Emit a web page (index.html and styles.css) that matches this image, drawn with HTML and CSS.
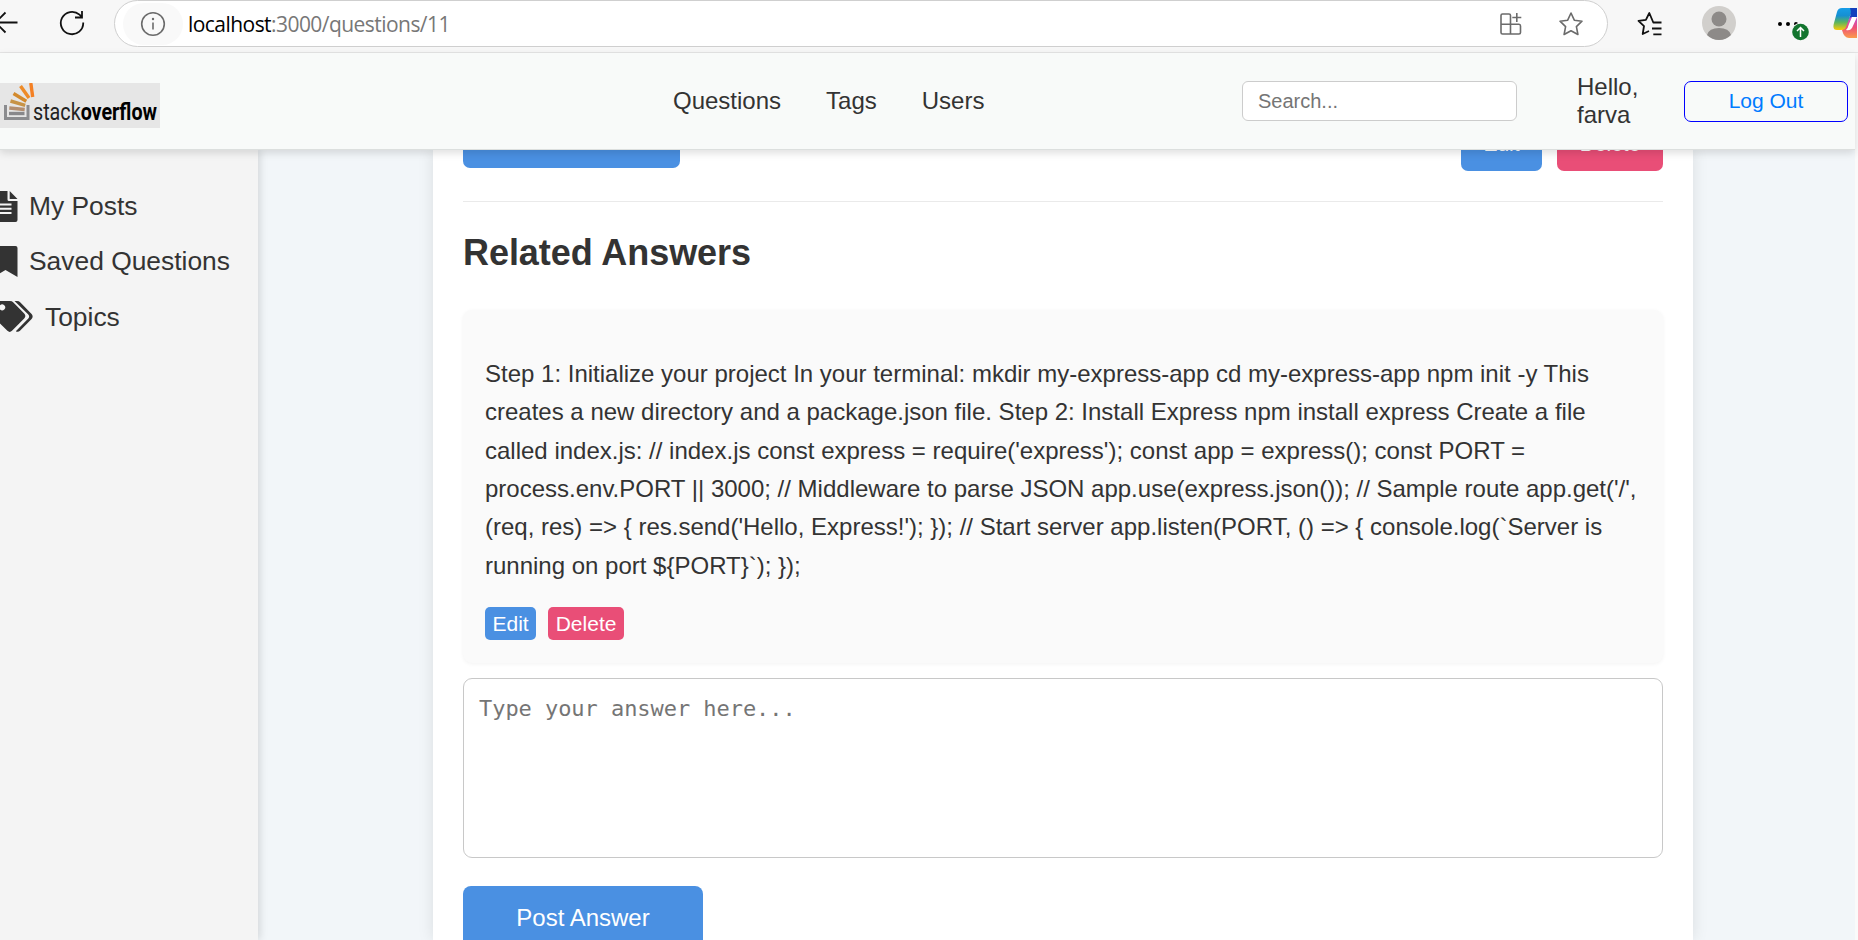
FILE: index.html
```html
<!DOCTYPE html>
<html lang="en">
<head>
<meta charset="utf-8">
<title>Question 11</title>
<link rel="stylesheet" href="styles.css">
</head>
<body>
<div class="browser">
  <svg class="ic back" width="18" height="26" viewBox="0 0 18 26"><path d="M17.5 12.5H-3M5.500 2.500L-4.500 12.500L5.500 22.500"/></svg>
  <svg class="ic reload" width="26" height="26" viewBox="0 0 26 26"><path d="M24.200 12.500A11.200 11.200 0 1 1 20.500 4.700L23 7.200M23 1V7.500H16"/></svg>
  <div class="address">
    <span class="info"><svg width="26" height="26" viewBox="0 0 26 26"><circle cx="13" cy="13" r="11.300"/><path d="M13 11.500V18.500"/><circle class="dot" cx="13" cy="8" r="1.200"/></svg></span>
    <span class="url"><b>localhost</b>:3000/questions/11</span>
    <svg class="addic" width="24" height="24" viewBox="0 0 24 24"><path d="M11.500 22V3.500Q11.500 2 10 2H3.500Q2 2 2 3.500V20.500Q2 22 3.500 22H20Q21.500 22 21.500 20.500V14Q21.500 12.300 20 12.300H2M17.800 1V10M13.300 5.500H22.300"/></svg>
    <svg class="star" width="26" height="26" viewBox="0 0 26 26"><path stroke-linejoin="round" d="M13 2L16.300 9.200L24 10.200L18.400 15.600L19.900 23.500L13 19.700L6.100 23.500L7.600 15.600L2 10.200L9.700 9.200Z"/></svg>
  </div>
  <svg class="ic fav" width="28" height="28" viewBox="0 0 28 28"><path stroke-linejoin="round" d="M25.500 12.500H17.300L13.300 3L9.900 9.800L2.500 10.800L8 16.100L6.700 24L13 21M16 18.500H25.500M17.300 24.400H25.500"/></svg>
  <svg class="avatar" width="34" height="34" viewBox="0 0 34 34"><circle cx="17" cy="17" r="17" fill="#d1cfcc"/><circle cx="17" cy="13" r="7.500" fill="#8d8a88"/><path d="M5 29Q7 22 17 22T29 29A17 17 0 0 1 5 29Z" fill="#8d8a88"/></svg>
  <svg class="more" width="34" height="32" viewBox="0 0 34 32"><circle cx="4" cy="12" r="2"/><circle cx="12" cy="12" r="2"/><circle cx="20" cy="12" r="2"/><circle cx="24.500" cy="20" r="9.300" fill="#f7f7f7"/><circle cx="24.500" cy="20" r="8.300" fill="#13752f"/><path d="M24.500 25V15.500M21 19L24.500 15.500L28 19" fill="none" stroke="#fff" stroke-width="1.500"/></svg>
  <svg class="copilot" width="24" height="31" viewBox="0 0 24 31">
    <defs><linearGradient id="a" x1="0" y1="0" x2="0" y2="1"><stop offset="0" stop-color="#169de8"/><stop offset=".35" stop-color="#168fd2"/><stop offset=".65" stop-color="#5cb55f"/><stop offset="1" stop-color="#fbcb08"/></linearGradient><linearGradient id="b" x1="0" y1="0" x2="0" y2="1"><stop offset="0" stop-color="#c04fd8"/><stop offset=".5" stop-color="#ee5078"/><stop offset="1" stop-color="#fb9b4b"/></linearGradient></defs>
    <path d="M9 22L17 9H24V30H16Q11 30 9 22Z" fill="url(#b)"/><path d="M9 0H22Q18 4 16 11L13 19Q12 22 8 22H4Q-1 22 1 15L4 4Q5 0 9 0Z" fill="url(#a)"/><path d="M17 0H24V9H19Q17 9 16 11Q19 5 17 0Z" fill="#123fbd"/><path d="M19 9H24L19 20Q17 23 13 22Q15 20 16 16Z" fill="#fff"/>
  </svg>
</div>
<header class="topbar">
  <svg class="logo" width="160" height="45" viewBox="0 0 160 45">
    <rect width="160" height="45" fill="#e6e6e6"/>
    <path d="M5.500 22V35.500H28V22" fill="none" stroke="#8b8c8f" stroke-width="3"/>
    <g fill="none" stroke-width="3.400"><path d="M9 30.500H24.500" stroke="#88888b"/><path d="M9.300 25L24.700 26.500" stroke="#b28e70"/><path d="M10.500 18L25.200 22.300" stroke="#c79346"/><path d="M13.500 10.500L26.300 18.300" stroke="#d38a2d"/><path d="M20.500 3L29 15" stroke="#ee8b28"/><path d="M30.800 0L32.700 14" stroke="#f48024"/></g>
    <text x="33" y="37" textLength="124" lengthAdjust="spacingAndGlyphs" class="word">stack<tspan class="strong">overflow</tspan></text>
  </svg>
  <nav class="nav"><a>Questions</a><a>Tags</a><a>Users</a></nav>
  <div class="search">Search...</div>
  <div class="hello">Hello,<br>farva</div>
  <div class="logout">Log Out</div>
</header>
<div class="page">
  <aside class="sidebar">
    <div class="item"><svg width="18" height="31" viewBox="0 0 18 31"><path d="M0 0H7.500V8.500Q7.500 10 9 10H17.500V29Q17.500 31 15.500 31H0V23H11.500V21H0V18.700H11.500V16.700H0V14.500H11.500V12.500H0ZM9.700 0L17.500 8H9.700Z"/></svg>My Posts</div>
    <div class="item"><svg width="18" height="31" viewBox="0 0 18 31"><path d="M0 0H15.500Q17.500 0 17.500 2V31L5.500 24L0 27.200Z"/></svg>Saved Questions</div>
    <div class="item topics"><svg width="33" height="31" viewBox="0 0 33 31"><path d="M0 0H10Q12 0 13.400 1.400L24.200 12.500Q26.500 15 24.200 17.500L12 29.800Q9.700 32 7.400 29.800L0 22.500V8.500A3 3 0 1 0 0 4.300ZM14.500 0H17Q19 0 20.400 1.400L31.600 13Q33.700 15.500 31.600 18L20 29.800Q18 31.600 15.800 30.300L28.300 17.500Q30 15.500 28.300 13.500Z"/></svg>Topics</div>
  </aside>
  <main class="content">
    <section class="card">
      <div class="actions"><span class="btn wide"></span><span class="btn edit">Edit</span><span class="btn delete">Delete</span></div>
      <h2 class="title">Related Answers</h2>
      <article class="answer">
        <p class="text">Step 1: Initialize your project In your terminal: mkdir my-express-app cd my-express-app npm init -y This<br>creates a new directory and a package.json file. Step 2: Install Express npm install express Create a file<br>called index.js: // index.js const express = require('express'); const app = express(); const PORT =<br>process.env.PORT || 3000; // Middleware to parse JSON app.use(express.json()); // Sample route app.get('/',<br>(req, res) =&gt; { res.send('Hello, Express!'); }); // Start server app.listen(PORT, () =&gt; { console.log(`Server is<br>running on port ${PORT}`); });</p>
        <div class="tools"><span class="small">Edit</span><span class="small red">Delete</span></div>
      </article>
      <div class="reply">Type your answer here...</div>
      <div class="post">Post Answer</div>
    </section>
  </main>
</div>
</body>
</html>
```

FILE: styles.css
```css
* { box-sizing: border-box; }
body { margin: 0; width: 1858px; height: 940px; overflow: hidden; display: flex; flex-direction: column; background: #fafafa; color: #333; font: 24px/normal "Liberation Sans", Arial, sans-serif; }
svg { display: block; flex: none; }
.browser { height: 53px; flex: none; display: flex; align-items: flex-start; background: #f7f7f7; border-bottom: 1px solid #e5e5e5; overflow: hidden; }
.ic { fill: none; stroke: #111; stroke-width: 1.8; }
.back { margin-top: 10px; }
.reload { margin: 10px 0 0 41px; }
.address { width: 1494px; height: 47px; margin-left: 29px; border: 1.500px solid #cfcfcf; border-radius: 24px; background: #fff; display: flex; align-items: center; flex: none; padding: 0 23px 0 8px; }
.info { width: 60px; height: 42px; border-radius: 21px; background: #f9f9f9; display: flex; align-items: center; justify-content: center; }
.address svg { fill: none; stroke: #6b6b6b; stroke-width: 1.600; }
.address .dot { fill: #6b6b6b; stroke: none; }
.url { margin-left: 5px; font: 21px "Open Sans", "Noto Sans", sans-serif; letter-spacing: -.55px; color: #777; }
.url b { font-weight: 400; color: #000; }
.addic { margin-left: auto; }
.star { margin: 0 0 0 35px; }
.fav { margin: 10px 0 0 28px; }
.avatar { margin: 6px 0 0 38px; }
.more { margin: 12px 0 0 40px; }
.copilot { margin: 8px 0 0 23px; }
.topbar { height: 97px; width: 1855px; flex: none; display: flex; align-items: center; background: #f8faf9; border-bottom: 1px solid #dcdfde; box-shadow: 0 3px 8px rgba(0,0,0,.13); position: relative; z-index: 2; }
.logo { margin-top: 8px; }
.word { font: 24px Roboto, "Liberation Sans", sans-serif; fill: #222; }
.strong { font-weight: 700; fill: #000; }
.nav { display: flex; gap: 45px; margin-left: 513px; width: 569px; }
.search { width: 275px; height: 40px; border: 1px solid #ccc; border-radius: 6px; background: #fff; font-size: 20px; line-height: 38px; padding-left: 15px; color: #757575; }
.hello { margin-left: 60px; width: 107px; line-height: 28px; }
.logout { width: 164px; height: 41px; border: 1px solid #00f; border-radius: 7px; text-align: center; font-size: 21px; line-height: 37px; color: #007bff; }
.page { width: 1855px; height: 790px; flex: none; display: flex; background: #f2f6f9; }
.sidebar { width: 258px; background: #f4f4f4; box-shadow: 2px 0 8px rgba(0,0,0,.13); padding-top: 41px; display: flex; flex-direction: column; gap: 24px; font-size: 26.400px; }
.item { display: flex; align-items: center; height: 31px; gap: 11px; }
.topics { gap: 12px; line-height: 32px; }
.item svg { fill: #333; }
.content { flex: 1; padding-left: 175px; }
.card { width: 1260px; height: 790px; background: #fff; box-shadow: 0 0 15px rgba(0,0,0,.1); padding: 0 30px; }
.actions { height: 52px; border-bottom: 1px solid #eaeaea; display: flex; align-items: flex-end; padding-bottom: 30px; color: #fff; font-size: 21px; }
.btn { height: 41px; border-radius: 7px; background: #4a90e2; text-align: center; line-height: 28px; }
.wide { width: 217px; margin: 0 auto 3px 0; }
.edit { width: 81px; }
.delete { width: 106px; margin-left: 15px; background: #e94e77; }
.title { margin: 30px 0 0; font-size: 36px; line-height: 41px; letter-spacing: -.05px; }
.answer { margin-top: 37px; height: 353px; border-radius: 9px; background: #fafafa; box-shadow: 0 1px 4px rgba(0,0,0,.05); padding: 45px 22px 0; }
.text { margin: 0; line-height: 38.330px; white-space: nowrap; }
.tools { display: flex; gap: 12px; margin-top: 22px; }
.small { height: 33px; padding: 0 7.500px; border-radius: 5px; background: #4a90e2; color: #fff; font-size: 21px; line-height: 33px; }
.red { background: #e94e77; }
.reply { margin-top: 15px; height: 180px; border: 1px solid #c8c8c8; border-radius: 9px; padding: 16px 15px; font: 22px/28px "DejaVu Sans Mono", monospace; letter-spacing: -.05px; color: #757575; }
.post { margin-top: 28px; width: 240px; height: 64px; border-radius: 8px; background: #4a90e2; color: #fff; text-align: center; line-height: 64px; }
```
